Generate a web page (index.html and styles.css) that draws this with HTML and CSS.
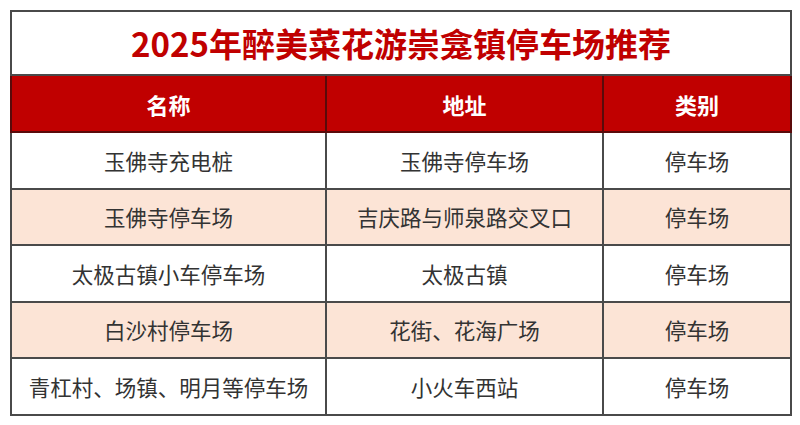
FILE: index.html
```html
<!DOCTYPE html>
<html lang="zh-CN">
<head>
<meta charset="utf-8">
<title>2025年醉美菜花游崇龛镇停车场推荐</title>
<link rel="stylesheet" href="styles.css">
</head>
<body>
<table class="park">
  <colgroup>
    <col class="c1"><col class="c2"><col class="c3">
  </colgroup>
  <tr class="title-row"><td colspan="3" class="title">2025年醉美菜花游崇龛镇停车场推荐</td></tr>
  <tr class="head"><th>名称</th><th>地址</th><th>类别</th></tr>
  <tr><td>玉佛寺充电桩</td><td>玉佛寺停车场</td><td>停车场</td></tr>
  <tr class="alt"><td>玉佛寺停车场</td><td>吉庆路与师泉路交叉口</td><td>停车场</td></tr>
  <tr><td>太极古镇小车停车场</td><td>太极古镇</td><td>停车场</td></tr>
  <tr class="alt"><td>白沙村停车场</td><td>花街、花海广场</td><td>停车场</td></tr>
  <tr><td>青杠村、场镇、明月等停车场</td><td>小火车西站</td><td>停车场</td></tr>
</table>
</body>
</html>
```
FILE: styles.css
```css
html, body {
  margin: 0;
  background: #ffffff;
}
body {
  padding: 10px 10px 0 10px;
  font-family: "Noto Sans CJK SC", "Noto Sans", sans-serif;
}
.park {
  border-collapse: collapse;
  width: 780px;
  table-layout: fixed;
}
.c1 { width: 315px; }
.c2 { width: 277px; }
.c3 { width: 188px; }
.park td, .park th {
  border: 2px solid #4a4a4a;
  text-align: center;
  vertical-align: middle;
  padding: 0;
  font-size: 21.5px;
  color: #333333;
  font-weight: 400;
  height: 54.5px;
  line-height: 1;
}
.park td.title {
  height: 62px;
  font-size: 33px;
  font-weight: 700;
  color: #c00000;
}
.head th {
  background: #c00000;
  color: #ffffff;
  font-weight: 700;
  font-size: 22px;
  height: 55px;
  border-color: #5a0a0a;
}
.alt td {
  background: #fce4d6;
}
```
